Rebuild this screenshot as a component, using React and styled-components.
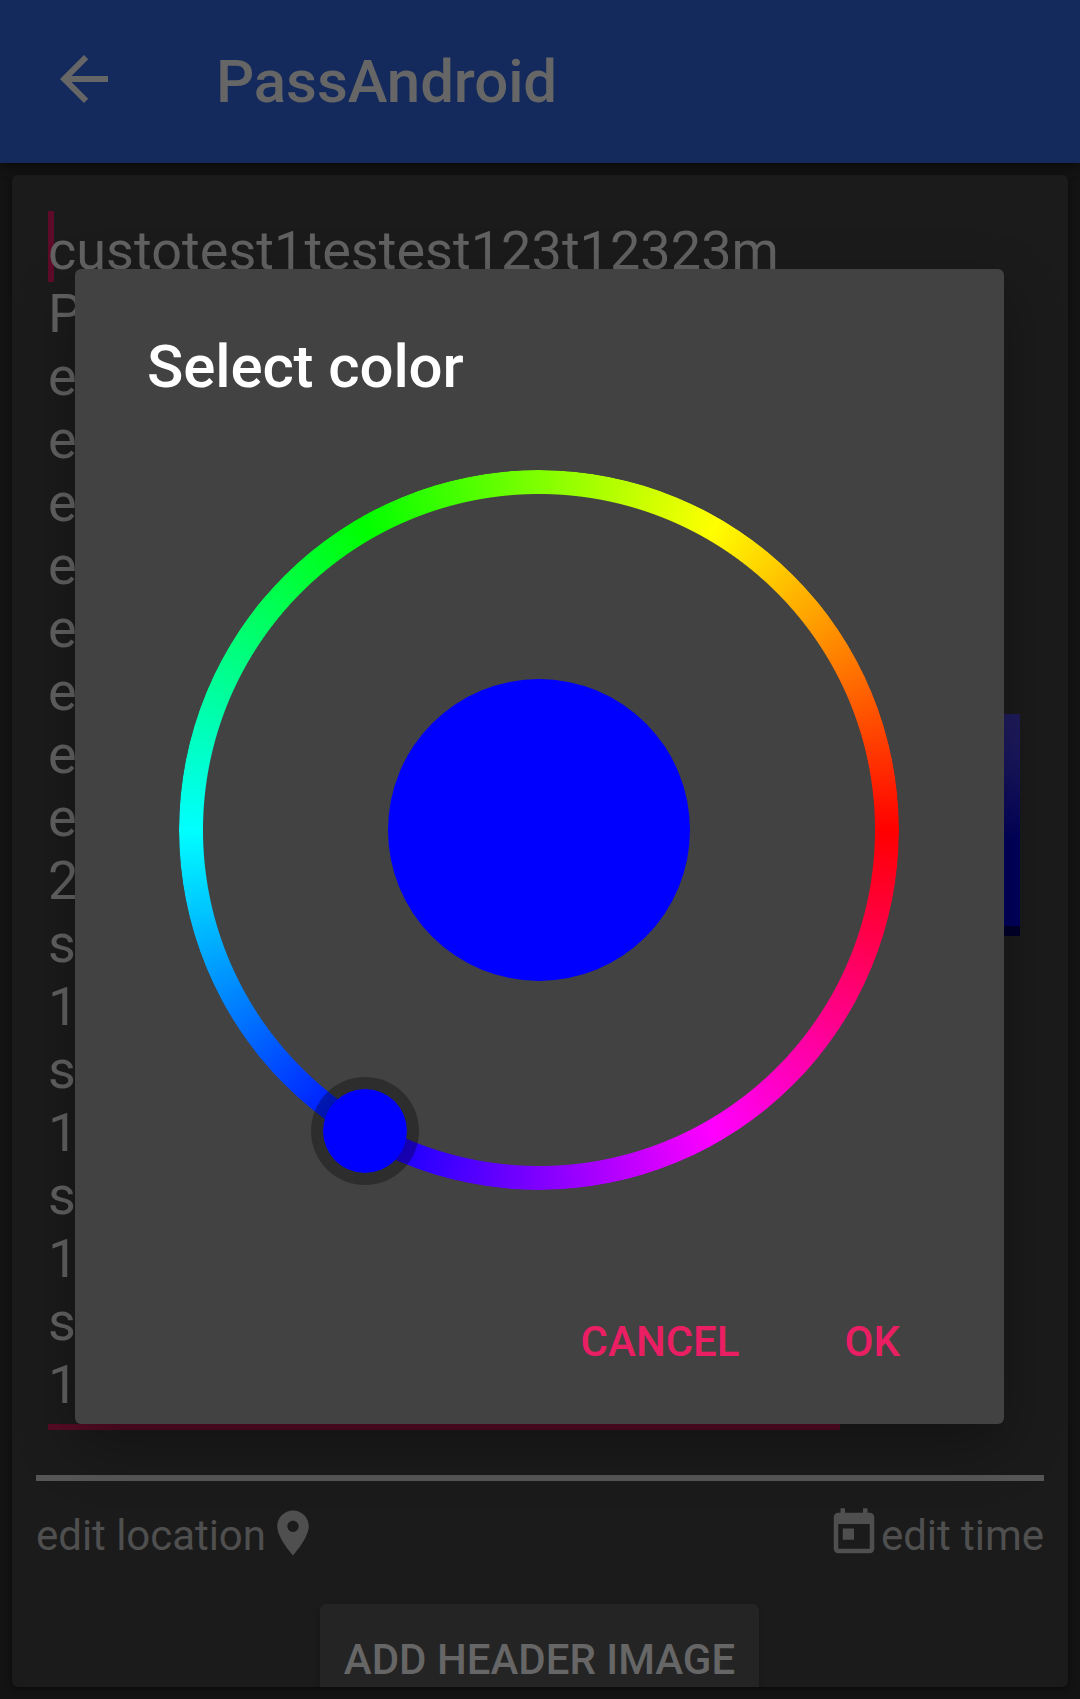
import React from "react";
import styled, { createGlobalStyle } from "styled-components";

const GlobalStyle = createGlobalStyle`
  * { box-sizing: border-box; }
  body {
    margin: 0;
    background: #131313;
    font-family: Roboto, "Noto Sans", sans-serif;
  }
`;

const Screen = styled.div`
  position: relative;
  display: flex;
  flex-direction: column;
  width: 1080px;
  height: 1699px;
  overflow: hidden;
  background: #131313;
`;

const AppBar = styled.header`
  display: flex;
  align-items: center;
  flex: none;
  height: 163px;
  padding: 0 48px 5px;
  gap: 96px;
  background: #152a5c;
  color: #666;
  box-shadow: 0 3px 10px rgba(0, 0, 0, 0.5);
`;

const AppTitle = styled.h1`
  margin: 5px 0 0;
  font-size: 60px;
  line-height: 70px;
  font-weight: 500;
  letter-spacing: -0.1px;
`;

const Icon = styled.svg`
  display: block;
  flex: none;
  width: ${(p) => p.$size}px;
  height: ${(p) => p.$size}px;
  fill: currentColor;
`;

const Card = styled.main`
  display: flex;
  flex-direction: column;
  flex: none;
  height: 1512px;
  margin: 12px 12px 0;
  padding: 36px 24px 0;
  border-radius: 6px;
  overflow: hidden;
  background: #1b1b1b;
  box-shadow: 0 2px 6px rgba(0, 0, 0, 0.45);
`;

const EditRow = styled.div`
  display: flex;
  align-items: center;
  justify-content: space-between;
  height: 1219px;
  padding: 0 24px 0 12px;
`;

const Editor = styled.div`
  display: flex;
  align-items: flex-start;
  width: 792px;
  height: 1219px;
  border-bottom: 6px solid #560b25;
`;

const Caret = styled.span`
  flex: none;
  width: 6px;
  height: 71px;
  margin-right: -6px;
  background: #5e0b29;
`;

const Lines = styled.div`
  position: relative;
  padding-top: 8px;
`;

const Line = styled.div`
  height: 63px;
  font-size: 54px;
  line-height: 63px;
  letter-spacing: 0.04px;
  color: #626262;
  white-space: nowrap;
`;

const Swatch = styled.div`
  width: 144px;
  height: 222px;
  margin-top: 9px;
  border-bottom: 10px solid #00002b;
  background: linear-gradient(#1f1c5c, #1a1860 20%, #00005e 62%, #00005e);
`;

const Divider = styled.hr`
  flex: none;
  width: 100%;
  height: 6px;
  margin: 45px 0 0;
  border: 0;
  background: #575757;
`;

const MetaRow = styled.div`
  display: flex;
  align-items: center;
  justify-content: space-between;
  height: 54px;
  margin-top: 25px;
`;

const MetaAction = styled.div`
  display: flex;
  align-items: center;
  height: 54px;
  color: #4f4f4f;
`;

const MetaLabel = styled.span`
  padding-top: 6px;
  font-size: 42px;
  line-height: 50px;
  letter-spacing: -0.04px;
`;

const HeaderButton = styled.button`
  align-self: center;
  flex: none;
  width: 439px;
  height: 108px;
  margin: 44px 1px 0 0;
  padding: 4px 0 0;
  border: 0;
  border-radius: 6px;
  background: #242424;
  color: #666;
  font: 500 42px/50px Roboto, "Noto Sans", sans-serif;
  white-space: nowrap;
  box-shadow: 0 2px 5px rgba(0, 0, 0, 0.25);
`;

const Dialog = styled.section`
  position: absolute;
  top: 269px;
  left: 75px;
  display: flex;
  flex-direction: column;
  width: 929px;
  height: 1155px;
  padding: 63px 72px 0;
  border-radius: 6px;
  background: #424242;
  box-shadow: 0 22px 60px rgba(0, 0, 0, 0.3);
`;

const DialogTitle = styled.h2`
  margin: 0;
  font-size: 60px;
  line-height: 70px;
  font-weight: 500;
  letter-spacing: -0.12px;
  color: #fff;
`;

const Wheel = styled.div`
  position: relative;
  display: flex;
  align-items: center;
  justify-content: center;
  flex: none;
  width: 720px;
  height: 720px;
  margin: 68px 0 0 32px;
`;

const HueRing = styled.div`
  position: absolute;
  inset: 0;
  border-radius: 50%;
  background: conic-gradient(from 90deg, #f00, #f0f, #00f, #0ff, #0f0, #ff0, #f00);
  mask: radial-gradient(circle, transparent 335.5px, #000 336.5px);
`;

const CurrentColor = styled.div`
  width: 302px;
  height: 302px;
  border-radius: 50%;
  background: #00f;
`;

const Pointer = styled.div`
  position: absolute;
  left: 132px;
  top: 607.4px;
  width: 108px;
  height: 108px;
  border: 12px solid rgba(0, 0, 0, 0.314);
  border-radius: 50%;
  background: #00f;
  background-clip: padding-box;
`;

const Actions = styled.div`
  display: flex;
  justify-content: flex-end;
  gap: 105px;
  margin-top: 127px;
  padding-right: 32px;
`;

const DialogButton = styled.button`
  padding: 0;
  border: 0;
  background: none;
  color: #e91e63;
  font: 500 42px/50px Roboto, "Noto Sans", sans-serif;
`;

const NOTE_LINES = [
  "custotest1testest123t12323m",
  "P", "e", "e", "e", "e", "e", "e", "e", "e", "2",
  "s", "1", "s", "1", "s", "1", "s", "1",
];

const ARROW = "M20 11H7.83l5.59-5.59L12 4l-8 8 8 8 1.41-1.41L7.83 13H20v-2z";
const PLACE =
  "M12 2C8.13 2 5 5.13 5 9c0 5.25 7 13 7 13s7-7.75 7-13c0-3.87-3.13-7-7-7zm0 9.5c-1.38 0-2.5-1.12-2.5-2.5s1.12-2.5 2.5-2.5 2.5 1.12 2.5 2.5-1.12 2.5-2.5 2.5z";
const TODAY =
  "M19 3h-1V1h-2v2H8V1H6v2H5c-1.11 0-1.99.9-1.99 2L3 19c0 1.1.89 2 2 2h14c1.1 0 2-.9 2-2V5c0-1.1-.9-2-2-2zm0 16H5V8h14v11zM7 10h5v5H7z";

function Glyph({ path, size }) {
  return (
    <Icon $size={size} viewBox="0 0 24 24" aria-hidden="true">
      <path d={path} />
    </Icon>
  );
}

export default function App() {
  return (
    <>
      <GlobalStyle />
      <Screen>
        <AppBar>
          <Glyph path={ARROW} size={72} />
          <AppTitle>PassAndroid</AppTitle>
        </AppBar>
        <Card>
          <EditRow>
            <Editor>
              <Caret />
              <Lines>
                {NOTE_LINES.map((text, i) => (
                  <Line key={i}>{text}</Line>
                ))}
              </Lines>
            </Editor>
            <Swatch />
          </EditRow>
          <Divider />
          <MetaRow>
            <MetaAction>
              <MetaLabel>edit location</MetaLabel>
              <Glyph path={PLACE} size={54} />
            </MetaAction>
            <MetaAction>
              <Glyph path={TODAY} size={54} />
              <MetaLabel>edit time</MetaLabel>
            </MetaAction>
          </MetaRow>
          <HeaderButton>ADD HEADER IMAGE</HeaderButton>
        </Card>
        <Dialog role="dialog" aria-label="Select color">
          <DialogTitle>Select color</DialogTitle>
          <Wheel>
            <HueRing />
            <CurrentColor />
            <Pointer />
          </Wheel>
          <Actions>
            <DialogButton>CANCEL</DialogButton>
            <DialogButton>OK</DialogButton>
          </Actions>
        </Dialog>
      </Screen>
    </>
  );
}
